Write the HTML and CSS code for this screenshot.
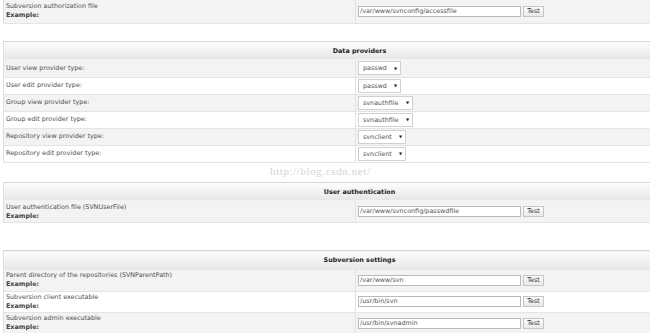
FILE: index.html
```html
<!DOCTYPE html>
<html lang="en">
<head>
  <meta charset="UTF-8" />
  <title>Settings</title>
  <link rel="stylesheet" href="styles.css">
</head>
<body>
  <div class="page">
    <table class="settings first">
      <tr class="odd two">
        <td class="label">Subversion authorization file<br><b>Example:</b></td>
        <td class="value"><span class="field">/var/www/svnconfig/accessfile</span><span class="btn">Test</span></td>
      </tr>
    </table>

    <table class="settings gap-dp">
      <tr><th colspan="2">Data providers</th></tr>
      <tr class="odd one"><td class="label">User view provider type:</td><td class="value"><span class="pick w-pw">passwd<i>&#9660;</i></span></td></tr>
      <tr class="one"><td class="label">User edit provider type:</td><td class="value"><span class="pick w-pw">passwd<i>&#9660;</i></span></td></tr>
      <tr class="odd one"><td class="label">Group view provider type:</td><td class="value"><span class="pick w-af">svnauthfile<i>&#9660;</i></span></td></tr>
      <tr class="one"><td class="label">Group edit provider type:</td><td class="value"><span class="pick w-af">svnauthfile<i>&#9660;</i></span></td></tr>
      <tr class="odd one"><td class="label">Repository view provider type:</td><td class="value"><span class="pick w-cl">svnclient<i>&#9660;</i></span></td></tr>
      <tr class="one"><td class="label">Repository edit provider type:</td><td class="value"><span class="pick w-cl">svnclient<i>&#9660;</i></span></td></tr>
    </table>

    <table class="settings gap-ua">
      <tr><th colspan="2">User authentication</th></tr>
      <tr class="odd two">
        <td class="label">User authentication file (SVNUserFile)<br><b>Example:</b></td>
        <td class="value"><span class="field">/var/www/svnconfig/passwdfile</span><span class="btn">Test</span></td>
      </tr>
    </table>

    <table class="settings gap-ss">
      <tr><th colspan="2">Subversion settings</th></tr>
      <tr class="odd two">
        <td class="label">Parent directory of the repositories (SVNParentPath)<br><b>Example:</b></td>
        <td class="value"><span class="field">/var/www/svn</span><span class="btn">Test</span></td>
      </tr>
      <tr class="two">
        <td class="label">Subversion client executable<br><b>Example:</b></td>
        <td class="value"><span class="field">/usr/bin/svn</span><span class="btn">Test</span></td>
      </tr>
      <tr class="odd two">
        <td class="label">Subversion admin executable<br><b>Example:</b></td>
        <td class="value"><span class="field">/usr/bin/svnadmin</span><span class="btn">Test</span></td>
      </tr>
    </table>

    <div class="watermark">http://blog.csdn.net/</div>
  </div>
</body>
</html>
```

FILE: styles.css
```css
* {
  margin: 0;
  padding: 0;
  box-sizing: border-box;
}

html, body {
  background: #fff;
  overflow: hidden;
}

body {
  font-family: 'DejaVu Sans', Verdana, sans-serif;
  font-size: 6.4px;
  color: #505050;
}

.page {
  position: relative;
  width: 650px;
  height: 333px;
  padding-left: 3px;
  overflow: hidden;
}

.settings {
  width: 712px;
  border-collapse: collapse;
  border-left: 1px solid #dedede;
}

.gap-dp { margin-top: 17px; }
.gap-ua { margin-top: 19px; }
.gap-ss { margin-top: 27px; }

th {
  height: 19px;
  font-weight: bold;
  color: #222;
  text-align: center;
  border-top: 1px solid #d6d6d6;
  background: linear-gradient(to bottom, #fdfdfd, #e6e6e6);
}

td {
  border-bottom: 1px solid #e4e4e4;
  vertical-align: middle;
}

tr.odd td { background: #f3f3f3; }

tr.one td { height: 17px; }
tr.two td { height: 21.5px; }

.first tr.two td { height: 23px; }

.label {
  width: 352px;
  padding-left: 2px;
  line-height: 9px;
  border-right: 1px solid #e2e2e2;
}

.label b {
  color: #444;
}

.value {
  padding-left: 2px;
}

.field {
  display: inline-block;
  width: 163px;
  height: 11px;
  line-height: 9px;
  padding-left: 1px;
  background: #fff;
  border: 1px solid #b9b9b9;
  color: #555;
  vertical-align: middle;
}

.btn {
  display: inline-block;
  width: 21px;
  height: 11px;
  line-height: 9px;
  margin-left: 2px;
  text-align: center;
  color: #333;
  background: linear-gradient(to bottom, #fafafa, #e9e9e9);
  border: 1px solid #c6c6c6;
  vertical-align: middle;
}

.pick {
  display: inline-flex;
  align-items: center;
  justify-content: space-between;
  height: 14px;
  padding: 0 3px 0 4px;
  background: #fff;
  border: 1px solid #d0d0d0;
  color: #555;
  vertical-align: middle;
}

.pick i {
  font-style: normal;
  font-size: 4px;
  color: #222;
}

.w-pw { width: 43px; }
.w-af { width: 55px; }
.w-cl { width: 48px; }

.watermark {
  position: absolute;
  left: 270px;
  top: 165px;
  font-family: 'Liberation Serif', serif;
  font-size: 11px;
  letter-spacing: 0.6px;
  color: #d3d3d3;
}
```
